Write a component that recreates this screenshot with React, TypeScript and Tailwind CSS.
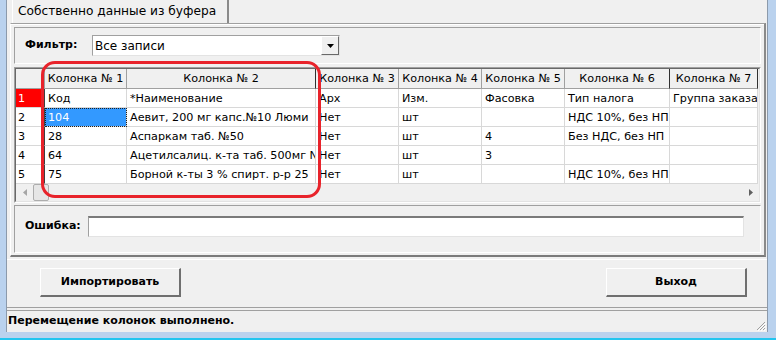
import * as React from "react"

const columns = [
  { title: "Колонка № 1", w: "w-[82px]", head: "border-r-[#a0a0a0]" },
  { title: "Колонка № 2", w: "w-[189px]", head: "border-r-[#303030]" },
  { title: "Колонка № 3", w: "w-[83px]", head: "border-r-[#a0a0a0]" },
  { title: "Колонка № 4", w: "w-[83px]", head: "border-r-[#a0a0a0]" },
  { title: "Колонка № 5", w: "w-[83px]", head: "border-r-[#a0a0a0]" },
  { title: "Колонка № 6", w: "w-[105px]", head: "border-r-[#303030]" },
  { title: "Колонка № 7", w: "w-[88px]", head: "border-r-[#303030]" },
]

const rows = [
  ["Код", "*Наименование", "Арх", "Изм.", "Фасовка", "Тип налога", "Группа заказа"],
  ["104", "Аевит, 200 мг капс.№10 Люми", "Нет", "шт", "", "НДС 10%, без НП", ""],
  ["28", "Аспаркам таб. №50", "Нет", "шт", "4", "Без НДС, без НП", ""],
  ["64", "Ацетилсалиц. к-та таб. 500мг N", "Нет", "шт", "3", "", ""],
  ["75", "Борной к-ты 3 % спирт. р-р 25", "Нет", "шт", "", "НДС 10%, без НП", ""],
]

function Grid() {
  return (
    <div className="mt-[3px] h-[136px] border border-t-[#a0a0a0] border-l-[#a0a0a0] border-b-white border-r-white">
      <div className="flex h-full flex-col border border-t-[#696969] border-l-[#696969] border-b-[#e3e3e3] border-r-[#e3e3e3] bg-[#f0f0f0] text-[11.2px]">
        {/* header */}
        <div className="flex h-[20px]">
          <div className="w-[29px] border-r border-b border-r-[#a0a0a0] border-b-[#a0a0a0] bg-[#f0f0f0]" />
          {columns.map((c) => (
            <div
              key={c.title}
              className={`${c.w} overflow-hidden whitespace-nowrap border-r border-b border-b-[#a0a0a0] bg-[#f0f0f0] px-[2px] text-center leading-[20px] ${c.head}`}
            >
              {c.title}
            </div>
          ))}
        </div>
        {rows.map((r, i) => (
          <div key={i} className="flex h-[19px]">
            <div
              className={`w-[29px] border-r border-b border-r-[#404040] border-b-[#d8d8d8] pl-[2px] leading-[20px] ${
                i === 0 ? "bg-[#ff0000] text-white" : "bg-white"
              }`}
            >
              {i + 1}
            </div>
            {r.map((v, j) => {
              const selected = i === 1 && j === 0
              return (
                <div
                  key={j}
                  className={`${columns[j].w} overflow-hidden whitespace-nowrap border-r border-b border-[#d8d8d8] pl-[3px] leading-[20px] ${
                    selected ? "bg-[#3399ff] text-white outline-1 outline-dotted outline-offset-[-1px] outline-[#202020]" : "bg-white"
                  }`}
                >
                  {v}
                </div>
              )
            })}
          </div>
        ))}
        {/* horizontal scroll bar */}
        <div className="flex h-[17px] items-center bg-[#f0f0f0]">
          <div className="flex w-[17px] justify-center">
            <svg width="4" height="7" viewBox="0 0 4 7">
              <path d="M4 0 L0 3.5 L4 7 Z" fill="#a6a6a6" />
            </svg>
          </div>
          <div className="h-[17px] w-[16px] rounded-[2px] border border-[#adadad] bg-[#e6e6e6]" />
          <div className="flex-1" />
          <div className="flex w-[17px] justify-center">
            <svg width="4" height="7" viewBox="0 0 4 7">
              <path d="M0 0 L4 3.5 L0 7 Z" fill="#606060" />
            </svg>
          </div>
        </div>
      </div>
    </div>
  )
}

export default function App() {
  return (
    <div className="relative h-[340px] w-[776px] overflow-hidden bg-[#bad2ee] font-['DejaVu_Sans',sans-serif] text-[12px] text-black">
      <div className="flex h-[332px]">
        <div className="w-[6px]" />
        <div className="flex w-[762px] flex-col border-x border-x-[#8c9aab] bg-[#f0f0f0]">
          {/* tab strip */}
          <div className="flex h-[23px] items-end pl-[5px]">
            <div className="flex h-[23px] w-[217px] items-center whitespace-nowrap border-l border-r-2 border-l-white border-r-[#8a8a8a] pl-[5px] text-[12.2px] leading-none">
              Собственно данные из буфера
            </div>
          </div>
          {/* tab sheet */}
          <div className="ml-[3px] mr-[1px] border-t border-l border-r-2 border-b-2 border-t-[#a0a0a0] border-l-white border-r-[#8a8a8a] border-b-[#7a7a7a]">
            <div className="border-t border-white px-[3px] pt-[2px] pb-[2px]">
              <div className="flex h-[37px] items-center border border-t-[#a0a0a0] border-l-[#a0a0a0] border-b-white border-r-white pl-[10px]">
                <div className="w-[67px] text-[11px] font-bold">Фильтр:</div>
                <div className="flex h-[21px] w-[248px] border border-t-[#a0a0a0] border-l-[#a0a0a0] border-b-[#e3e3e3] border-r-[#e3e3e3] bg-white">
                  <div className="flex flex-1 items-center pl-[2px] leading-none">Все записи</div>
                  <div className="flex w-[18px] items-center justify-center border border-t-white border-l-white border-b-[#696969] border-r-[#696969] bg-[#f0f0f0]">
                    <svg width="7" height="4" viewBox="0 0 7 4">
                      <path d="M0 0 L7 0 L3.5 4 Z" fill="#000" />
                    </svg>
                  </div>
                </div>
              </div>
              <Grid />
              <div className="mt-[2px] flex h-[48px] items-start border border-t-[#a0a0a0] border-l-[#a0a0a0] border-b-white border-r-white pl-[10px] pt-[10px]">
                <div className="flex h-[21px] w-[63px] items-center text-[11px] font-bold">Ошибка:</div>
                <div className="h-[21px] w-[656px] border border-t-2 border-t-[#7a7a7a] border-l-[#a0a0a0] border-b-[#e3e3e3] border-r-[#e3e3e3] bg-white" />
              </div>
            </div>
          </div>
          {/* buttons */}
          <div className="mt-[2px] flex h-[49px] items-start justify-between border-t border-b border-t-white border-b-[#a0a0a0] pl-[33px] pr-[20px] pt-[8px]">
            {["Импортировать", "Выход"].map((b) => (
              <div
                key={b}
                className="flex h-[29px] w-[141px] items-center justify-center border border-r-2 border-b-2 border-t-white border-l-white border-r-[#6f6f6f] border-b-[#6f6f6f] bg-[#f0f0f0] text-[11px] font-bold"
              >
                {b}
              </div>
            ))}
          </div>
          {/* status bar */}
          <div className="mt-[2px] flex flex-1 items-center border-t border-t-[#a0a0a0] pl-[1px]">
            <div className="flex-1 text-[11px] font-bold">Перемещение колонок выполнено.</div>
            <svg width="11" height="11" viewBox="0 0 11 11" className="mt-[8px] mr-[1px]">
              <path d="M10 2 L2 10 M10 5 L5 10 M10 8 L8 10" stroke="#a0a0a0" strokeWidth="1" />
              <path d="M11 3 L3 11 M11 6 L6 11 M11 9 L9 11" stroke="#ffffff" strokeWidth="1" />
            </svg>
          </div>
        </div>
      </div>
      <div className="h-[6px]" />
      <div className="h-[2px] bg-[#22c5ef]" />
      {/* red annotation frame */}
      <div className="absolute left-[41px] top-[61px] h-[137px] w-[280px] rounded-[14px] border-[3px] border-[#e8232b]" />
    </div>
  )
}
